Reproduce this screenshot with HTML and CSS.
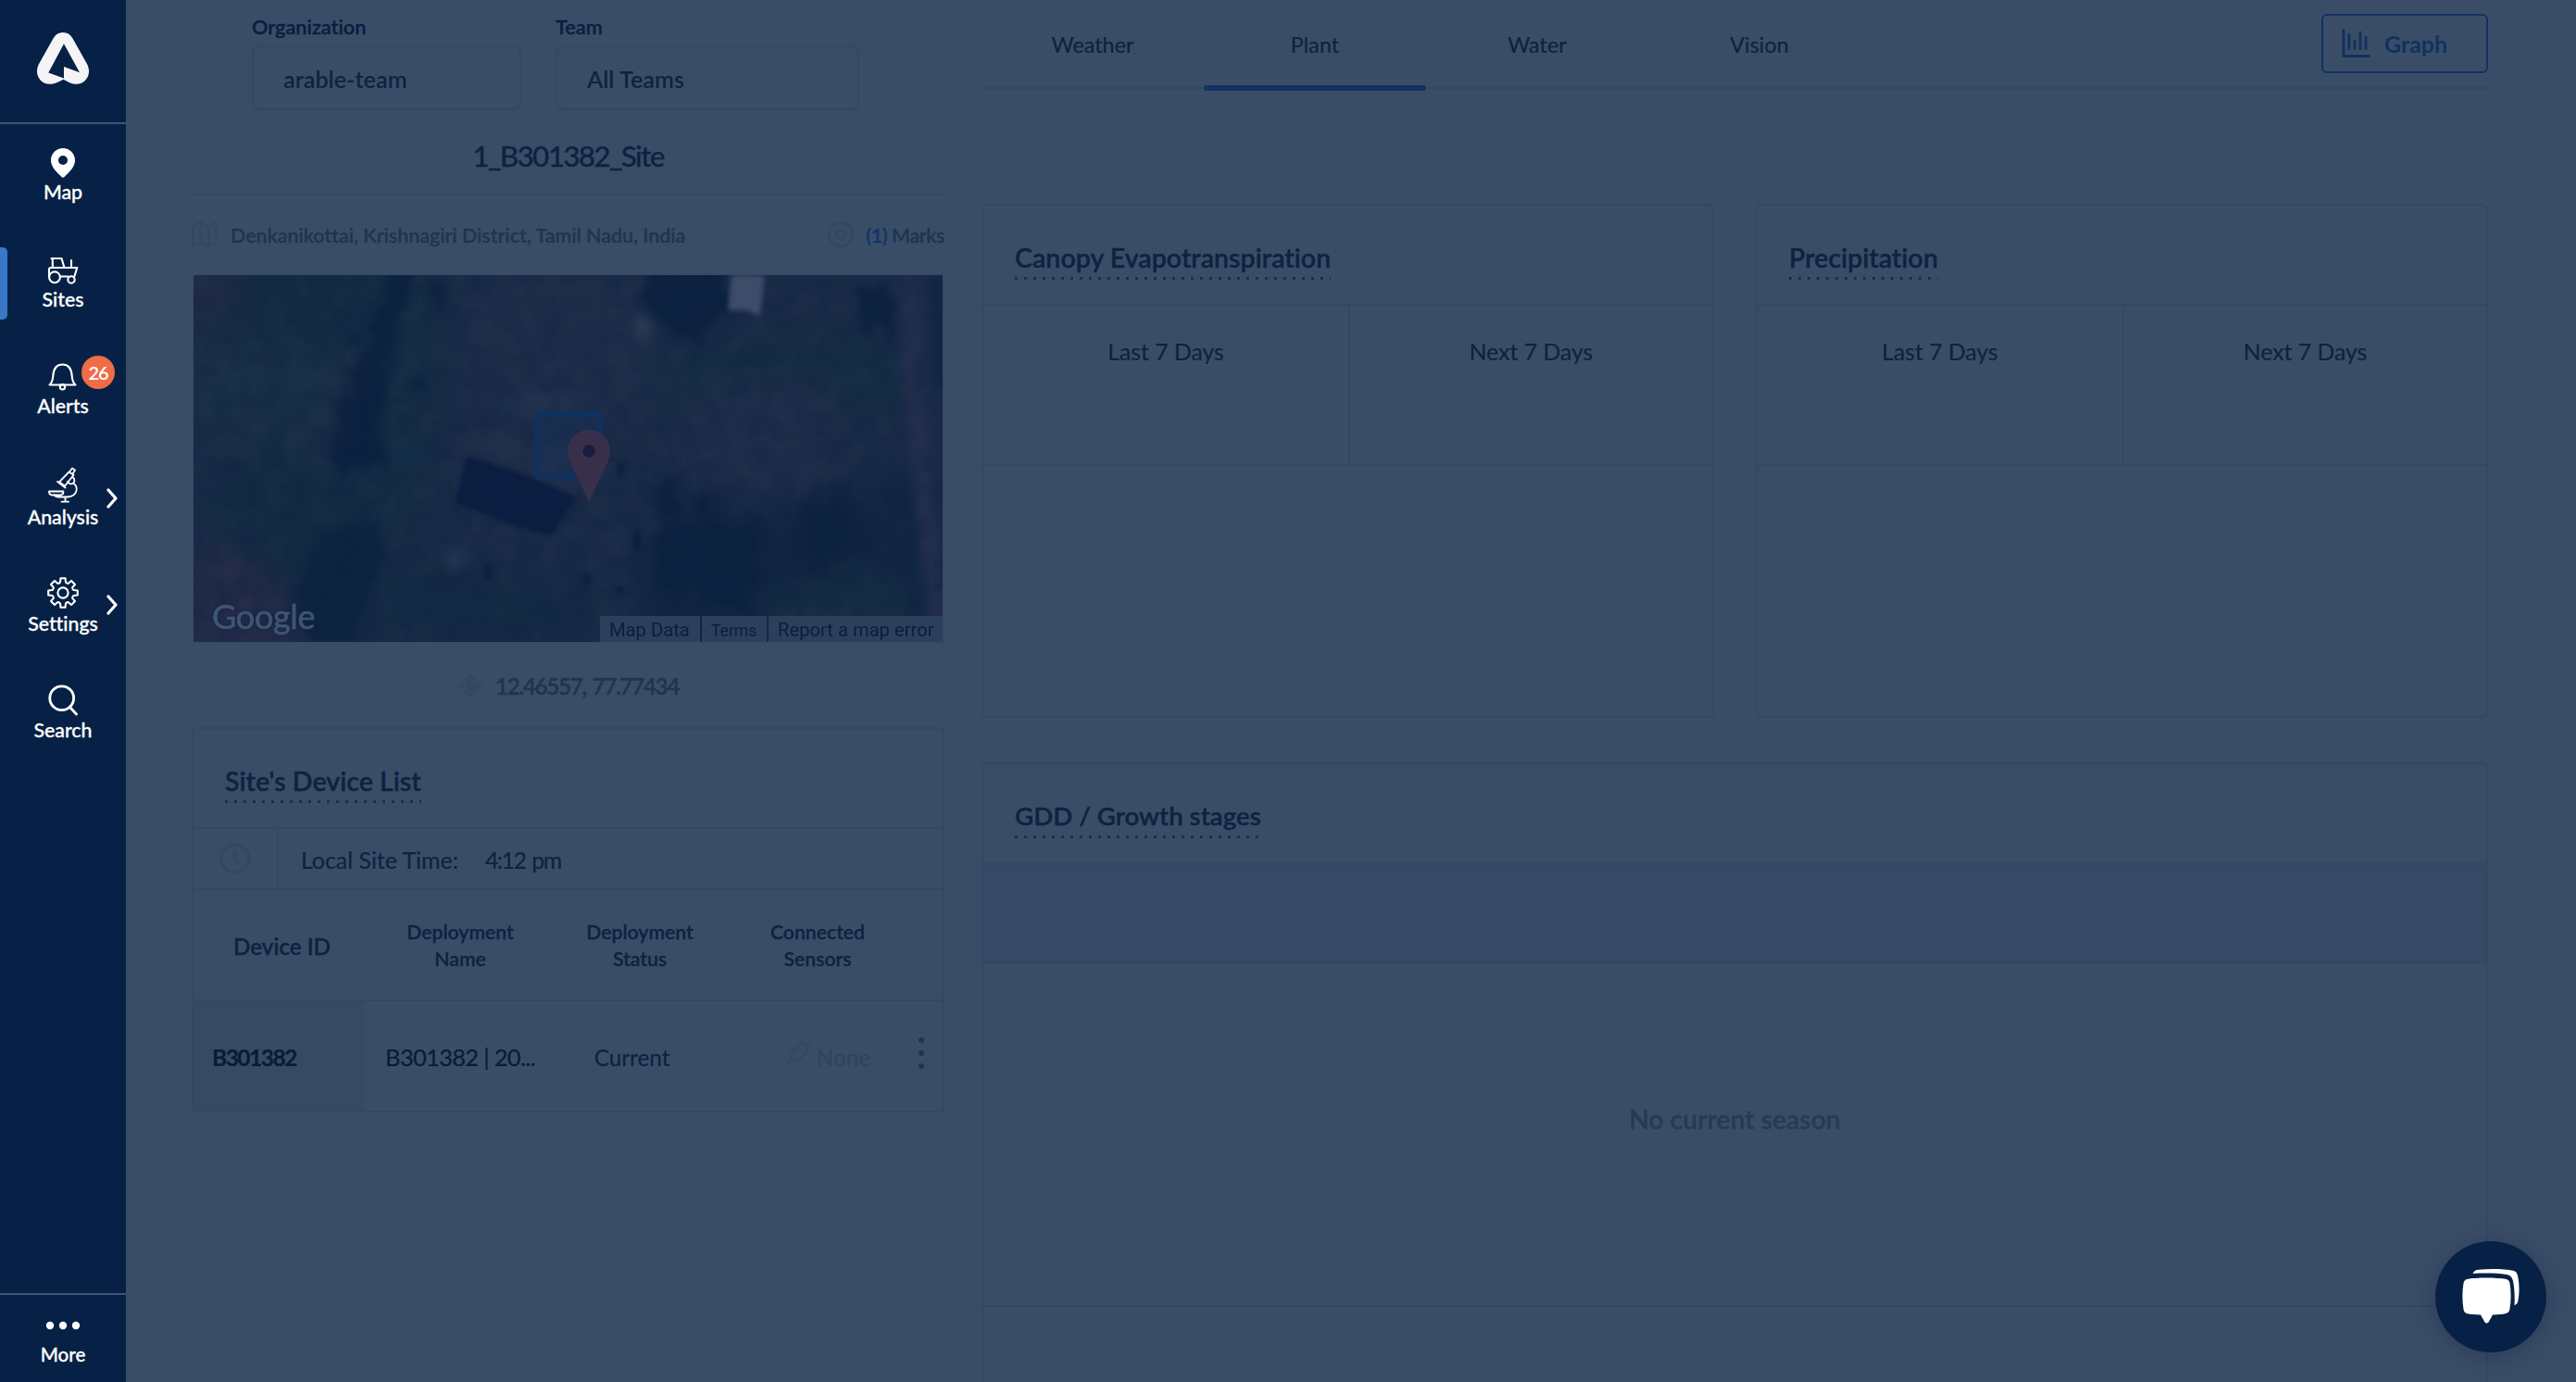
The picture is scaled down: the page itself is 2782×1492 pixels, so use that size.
FILE: index.html
```html
<!DOCTYPE html>
<html lang="en">
<head>
<meta charset="utf-8">
<title>1_B301382_Site</title>
<link rel="stylesheet" href="styles.css">
</head>
<body>
<aside class="sidebar">
  <div class="logo">
    <svg width="56" height="56" viewBox="0 0 56 56"><path fill="#f4f4f7" fill-rule="evenodd" d="M28 0c4.500 0 8 2 10.200 6L54.500 35c4.500 10-1.500 20.700-12 20.700-5 0-8-2-14.200-5C22 54 19 55.700 13.500 55.700 3 55.700-3 45 1.500 35L17.800 6C20 2 23.500 0 28 0zM29 12.300L12.300 43.500 29 49.500V37l17 6.300z"/></svg>
  </div>
  <nav class="nav">
    <a class="nav-item nav-map">
      <svg class="nav-icon" viewBox="0 0 40 40"><path fill="#fff" fill-rule="evenodd" d="M20 8c7.200 0 13 5.800 13 13 0 7.500-6.500 13-11.500 18q-1.500 1.500-3 0C13.500 34 7 28.500 7 21 7 13.800 12.800 8 20 8zm0 8a5 5 0 1 0 0 10 5 5 0 0 0 0-10z"/></svg>
      <span>Map</span>
    </a>
    <a class="nav-item nav-sites active">
      <svg class="nav-icon line" viewBox="0 0 40 40"><path d="M7.500 11h11l3 10M8.800 11v10M5 31V23q0-2 2-2h28.300l-3 9.500M17.500 30.500h8M29 13v8"/><circle cx="11" cy="31.300" r="5.900"/><circle cx="29" cy="34" r="3.700"/></svg>
      <span>Sites</span>
    </a>
    <a class="nav-item nav-alerts">
      <svg class="nav-icon line" viewBox="0 0 40 40"><path d="M5.500 32.500c3-2.500 3.500-5.500 3.800-9.500C9.700 15.500 13 10.500 19.500 10.500S29.300 15.500 29.700 23c.300 4 .800 7 3.800 9.500z"/><circle cx="19.500" cy="34.800" r="2.700"/></svg>
      <span>Alerts</span>
      <b class="badge">26</b>
    </a>
    <a class="nav-item nav-analysis">
      <svg class="nav-icon thin" viewBox="0 0 40 40"><path d="M27 6.500l3-4 3 2-2.500 4.300M26.500 6.500l5 3.300-9.500 12-6-4.500zM14 17l8.500 6.500M30.500 12c3.500 3 1.500 8-2 7.300-2 0-3-1-3.500-2.500M31 18.500c6 4 5 14.500-6 15H15c-2 0-4-1-4.500-2.500M5 27.500h15.500c0 3-1 4-4 4H8.500c-2.500 0-3.500-1.500-3.500-4zM22.500 34v4.500M18.500 38.700h7.500"/></svg>
      <span>Analysis</span>
      <svg class="chevron" viewBox="0 0 12 22"><path d="M2 2l8 9-8 9"/></svg>
    </a>
    <a class="nav-item nav-settings">
      <svg class="nav-icon line" viewBox="0 0 40 40"><g transform="translate(20 22)"><circle r="5.600"/><path d="M-3-11.400L-2.500-15.800H2.500L3-11.400Q4.500-9.800 5.900-10.200L9-13 13-9 10.200-5.900Q10-4 11.400-3L15.800-2.500V2.500L11.400 3Q9.800 4.500 10.200 5.900L13 9 9 13 5.900 10.200Q4 10 3 11.400L2.500 15.800H-2.500L-3 11.400Q-4.500 9.800-5.900 10.200L-9 13-13 9-10.200 5.900Q-10 4-11.400 3L-15.800 2.500V-2.500L-11.400-3Q-9.800-4.500-10.200-5.900L-13-9-9-13-5.900-10.200Q-4-10-3-11.400z"/></g></svg>
      <span>Settings</span>
      <svg class="chevron" viewBox="0 0 12 22"><path d="M2 2l8 9-8 9"/></svg>
    </a>
    <a class="nav-item nav-search">
      <svg class="nav-icon bold" viewBox="0 0 40 40"><circle cx="18.700" cy="20.700" r="12.900"/><path d="M27.500 30.500l7 7.500"/></svg>
      <span>Search</span>
    </a>
  </nav>
  <div class="more">
    <svg width="40" height="10" viewBox="0 0 40 10" fill="#fff"><circle cx="6" cy="5" r="4.200"/><circle cx="20" cy="5" r="4.200"/><circle cx="34" cy="5" r="4.200"/></svg>
    <span>More</span>
  </div>
</aside>

<main class="content">
  <section class="site">
    <div class="filters">
      <label class="filter filter-org"><span>Organization</span><div class="select">arable-team</div></label>
      <label class="filter filter-team"><span>Team</span><div class="select">All Teams</div></label>
    </div>
    <h1 class="site-name">1_B301382_Site</h1>
    <div class="location">
      <svg width="28" height="30" viewBox="0 0 28 30" class="faint"><path d="M1.500 6.500L9.500 2l9 5.500L26.500 2v20.500l-8 5.500-9-5.500-8 5.500zM9.500 2v20.500M18.500 7.500V28"/></svg>
      <span class="place">Denkanikottai, Krishnagiri District, Tamil Nadu, India</span>
      <svg width="28" height="28" viewBox="0 0 28 28" class="faint"><circle cx="14" cy="14" r="12.800"/><circle cx="14" cy="14" r="4.500"/></svg>
      <span class="marks"><i>(1)</i> Marks</span>
    </div>
    <div class="map">
      <svg class="aerial" viewBox="0 0 809 396" preserveAspectRatio="none" color-interpolation-filters="sRGB">
        <defs>
          <filter id="b20" x="-50%" y="-50%" width="200%" height="200%"><feGaussianBlur stdDeviation="16"/></filter>
          <filter id="b6" x="-50%" y="-50%" width="200%" height="200%"><feGaussianBlur stdDeviation="6"/></filter>
          <filter id="b3" x="-50%" y="-50%" width="200%" height="200%"><feGaussianBlur stdDeviation="2.500"/></filter>
          <filter id="trees" x="-20%" y="-20%" width="140%" height="140%"><feTurbulence type="fractalNoise" baseFrequency=".06" numOctaves="3" seed="4"/><feDisplacementMap in="SourceGraphic" scale="34" xChannelSelector="R" yChannelSelector="G"/><feGaussianBlur stdDeviation="4"/></filter>
          <filter id="grain" x="0" y="0" width="100%" height="100%"><feTurbulence type="fractalNoise" baseFrequency=".04" numOctaves="4" seed="9"/><feColorMatrix values="0 0 0 0 .05  0 0 0 0 .13  0 0 0 0 .25  1.600 0 0 0 -.6"/></filter>
        </defs>
        <rect width="809" height="396" fill="#1b2c48"/>
        <g filter="url(#b20)">
          <path fill="#152c45" d="M40-20H230V70L130 110 50 60zM40 190L210 210 170 400 90 330 0 250z"/>
          <path fill="#1a3048" d="M0 60L180 80 130 200 0 170z"/>
          <path fill="#172e46" d="M215 0H275L250 250 200 300 190 150zM500 80L760 60 780 150 620 130 520 200z"/>
          <path fill="#252c49" d="M0 290L50 300 110 360 110 400H0zM0 0H50L20 50H0z"/>
          <path fill="#1e2e4a" d="M290 0H480L500 120 480 170 300 120z"/>
          <path fill="#122742" d="M520 230L640 260 790 200 809 400H470z"/>
          <path fill="#1f2d4a" d="M520 130L680 110 690 200 620 250 520 220z"/>
          <path fill="#182f47" d="M620 360L740 320 790 396H600z"/>
          <path fill="#152b45" d="M200 290L250 310 440 340 420 400H180z"/>
        </g>
        <g filter="url(#trees)" fill="#0b2140" opacity=".85">
          <path d="M215-10L240 0 215 70 208 130 200 200 160 218 150 190 160 140 175 90 200 40z"/>
          <path d="M130 290L150 280 195 260 205 300 190 350 165 400H120L110 340z" opacity=".75"/>
          <path d="M490-10H575V40L545 70 505 60 488 30zM715 10L760 20 755 70 720 50z"/>
          <path d="M500 235L512 210 530 270 500 265zM550 235L560 240 545 275 530 270zM480 290L470 320 480 310zM510 265L495 300 500 340 600 360 610 270z" opacity=".9"/>
          <path d="M650 250L700 230 720 290 660 330z" opacity=".6"/>
          <ellipse cx="244" cy="120" rx="11" ry="13" opacity=".7"/>
          <ellipse cx="265" cy="25" rx="10" ry="14" opacity=".7"/>
          <ellipse cx="205" cy="200" rx="5" ry="22"/>
        </g>
        <g filter="url(#b6)">
          <path fill="#212f4b" d="M296 160L420 190 415 235 290 190z"/>
          <path fill="none" stroke="#252f4e" stroke-width="18" d="M770 0C775 140 795 280 806 396"/>
          <path fill="none" stroke="#0f2440" stroke-width="10" d="M800 0L809 120"/>
          <circle cx="484" cy="57" r="12" fill="#2b3955"/>
          <ellipse cx="370" cy="140" rx="40" ry="12" fill="#233350"/>
          <circle cx="285" cy="305" r="12" fill="#243652"/><circle cx="230" cy="195" r="18" fill="#132f48"/>
        </g>
        <rect width="809" height="396" filter="url(#grain)" opacity=".45"/>
        <g filter="url(#b3)">
          <path fill="#0b1d40" d="M295 195L355 215 415 240 405 252 385 282 345 270 283 246z"/>
          <path fill="#3c4c69" d="M581 0H617L612 44 596 38 577 38z"/>
          <g fill="#0b203f"><ellipse cx="318" cy="320" rx="4" ry="9"/><ellipse cx="425" cy="328" rx="4" ry="7"/><ellipse cx="461" cy="210" rx="4" ry="8"/><ellipse cx="461" cy="340" rx="4" ry="5"/><ellipse cx="479" cy="285" rx="5" ry="12"/></g>
        </g>
        <rect x="371.500" y="150" width="68" height="68" rx="1" fill="#17355f" fill-opacity=".35" stroke="#10315e" stroke-width="6"/>
        <path fill="#38304b" d="M427 167c13 0 23 10 23 23 0 6-2 10-4.500 15L427 245l-18.500-40c-2.500-5-4.500-9-4.500-15 0-13 10-23 23-23z"/>
        <circle cx="427" cy="190" r="6.800" fill="#1b1d3f"/>
      </svg>
      <div class="google">Google</div>
      <div class="attribution"><span>Map Data</span><span class="terms">Terms</span><span>Report a map error</span></div>
    </div>
    <div class="coords">
      <svg width="28" height="28" viewBox="0 0 28 28" class="faint"><circle cx="14" cy="14" r="8.500"/><circle cx="14" cy="14" r="4.500" fill="#334863"/><path d="M14 0v6M14 22v6M0 14h6M22 14h6"/></svg>
      <span>12.46557, 77.77434</span>
    </div>
    <div class="card devices">
      <header class="card-head"><h2>Site's Device List</h2></header>
      <div class="time-row">
        <div class="clock"><svg width="34" height="34" viewBox="0 0 34 34"><circle cx="17" cy="17" r="15"/><path d="M16.500 8v10l5.500 4"/></svg></div>
        <span class="time-label">Local Site Time:</span><span class="time-value">4:12 pm</span>
      </div>
      <div class="grid-row grid-head">
        <div class="id-head">Device ID</div><div>Deployment<br>Name</div><div>Deployment<br>Status</div><div>Connected<br>Sensors</div><div></div>
      </div>
      <div class="grid-row grid-data">
        <div class="device-id">B301382</div>
        <div class="device-name">B301382 | 20...</div>
        <div class="device-status">Current</div>
        <div class="device-sensors"><svg width="28" height="28" viewBox="0 0 28 28" class="faint"><path d="M1.500 26.500l5-5M26.500 1.500l-5 5M11 8l6-4c3-2 9 4 7 7l-4 5M9 10l-3 4c-3 4 3 11 8 8l3-3M10 9l3 3M16 19l2-2"/></svg><span>None</span></div>
        <div class="kebab"><i></i><i></i><i></i></div>
      </div>
    </div>
  </section>

  <section class="data">
    <div class="tabs">
      <a class="tab">Weather</a><a class="tab selected">Plant</a><a class="tab">Water</a><a class="tab">Vision</a>
      <button class="graph">
        <svg width="31" height="32" viewBox="0 0 31 32"><path d="M2 1.500V29.500H29.500" stroke-width="3"/><path d="M8 6v15.500M14 13.500v8M20 4v17.500M26 9.500v12" stroke-width="3"/></svg>
        <span>Graph</span>
      </button>
    </div>
    <div class="summary">
      <div class="card metric">
        <header class="card-head"><h2>Canopy Evapotranspiration</h2></header>
        <div class="periods"><div>Last 7 Days</div><div>Next 7 Days</div></div>
      </div>
      <div class="card metric">
        <header class="card-head"><h2>Precipitation</h2></header>
        <div class="periods"><div>Last 7 Days</div><div>Next 7 Days</div></div>
      </div>
    </div>
    <div class="card growth">
      <header class="card-head"><h2>GDD / Growth stages</h2></header>
      <div class="band"></div>
      <div class="season">No current season</div>
    </div>
  </section>
</main>

<button class="chat">
  <svg width="62" height="60" viewBox="0 0 62 60" fill="#fff"><path d="M5 11C15 9 37 9 48 11q3 1 3.500 4c1.500 9 1.500 19 0 28q-.500 4-4 5c-5 1-9 1.300-14.500 1.500L28.500 57.500q-2 2-4 0L20 49.500C15 49.300 9 49 5 48q-3-1-3.500-4.500C0 34 0 25 1.500 15.500Q2 12 5 11z"/><path d="M12 4C13 2 15 1 18 .800 30-.300 45-.200 56 2q3 1 4 5c2 9 2 19 .500 27-.5 3-2 4.500-4 5 .5-9 0-19-1.500-26Q54 7 48 6C37 4.300 24 4.300 11.500 5z"/></svg>
</button>
</body>
</html>
```
FILE: styles.css
```css
:root {
  --navy: #062145;
  --page: #3a4d67;
  --line: #334862;
  --ink: #0d2342;
  --blue: #11325f;
}
* { box-sizing: border-box; }
body {
  margin: 0;
  height: 1492px;
  overflow: hidden;
  display: flex;
  background: var(--page);
  color: var(--ink);
  font-family: Lato, "Liberation Sans", sans-serif;
  font-weight: 500;
  font-variant-ligatures: none;
}
h1, h2 { margin: 0; font-weight: 500; }
i { font-style: normal; }
svg { display: block; flex: none; }
button { font: inherit; padding: 0; }

/* Sidebar */
.sidebar {
  width: 136px;
  height: 1492px;
  flex: none;
  display: flex;
  flex-direction: column;
  background: var(--navy);
  color: #fff;
  font-size: 21.3px;
  line-height: 28px;
}
.logo {
  height: 134px;
  padding: 35px 0 0 40px;
  border-bottom: 2px solid #44546f;
}
.nav { flex: 1; }
.nav-item {
  position: relative;
  height: 115px;
  display: flex;
  flex-direction: column;
  align-items: center;
  justify-content: flex-end;
}
.nav-item span, .more span { -webkit-text-stroke: .3px; }
.nav-map { height: 87px; }
.nav-sites { height: 116px; }
.nav-analysis { height: 120px; }
.nav-icon { width: 40px; height: 40px; margin-bottom: 1px; }
.nav-icon, .chevron { fill: none; stroke-linecap: round; stroke-linejoin: round; }
.line { stroke: #fff; stroke-width: 2.1; }
.thin { stroke: #fff; stroke-width: 1.8; }
.bold { stroke: #fff; stroke-width: 2.8; }
.active::before {
  content: "";
  position: absolute;
  left: 0;
  top: 46px;
  width: 8px;
  height: 78px;
  border-radius: 0 5px 5px 0;
  background: #3878c7;
}
.badge {
  position: absolute;
  left: 88px;
  top: 47px;
  width: 36px;
  height: 36px;
  border-radius: 50%;
  background: #ee6c46;
  font-size: 20px;
  font-weight: 600;
  letter-spacing: -1px;
  line-height: 37px;
  text-align: center;
}
.chevron {
  position: absolute;
  left: 115px;
  bottom: 23px;
  width: 12px;
  height: 22px;
  stroke: #fff;
  stroke-width: 3.2;
}
.more {
  height: 96px;
  display: flex;
  flex-direction: column;
  align-items: center;
  gap: 12px;
  padding-top: 28px;
  border-top: 2px solid #44546f;
  font-size: 20.6px;
}

/* Page */
.content {
  flex: 1;
  display: grid;
  grid-template-columns: 813px 1627px;
  column-gap: 40px;
  padding-left: 71px;
  align-items: start;
}
.faint { fill: none; stroke: var(--line); stroke-width: 2.4; }
.card { border: 2px solid var(--line); border-radius: 6px; }
.card-head { height: 108px; padding: 40px 0 0 34px; border-bottom: 2px solid var(--line); }
.card-head h2 {
  width: fit-content;
  height: 40px;
  font-size: 28.6px;
  font-weight: 600;
  -webkit-text-stroke: .4px;
  line-height: 32px;
  background: repeating-linear-gradient(90deg, var(--blue) 0 3px, transparent 3px 10px) 0 100% / 100% 3px no-repeat;
}

/* Site column */
.filters { display: flex; gap: 37px; padding: 14px 0 0 65px; }
.filter { font-size: 21.7px; font-weight: 600; line-height: 30px; color: #081e40; }
.filter > span { -webkit-text-stroke: .3px; }
.filter-org { width: 291px; }
.filter-team { width: 328px; }
.select {
  height: 70px;
  margin-top: 5px;
  padding-left: 32px;
  border: 2px solid var(--line);
  border-radius: 8px;
  font-size: 25.2px;
  line-height: 69px;
  color: var(--ink);
}
.site-name {
  height: 92px;
  padding-top: 5px;
  border-bottom: 2px solid var(--line);
  font-size: 31.5px;
  line-height: 88px;
  letter-spacing: -1.7px;
  text-align: center;
  -webkit-text-stroke: .3px;
}
.location {
  height: 84px;
  display: flex;
  align-items: center;
  font-size: 21.4px;
  font-weight: 600;
  color: #1e3552;
  -webkit-text-stroke: .3px;
}
.place { flex: 1; padding: 2px 0 0 14px; }
.marks { padding: 2px 0 0 13px; letter-spacing: -.4px; }
.marks i { color: #10356b; }
.map {
  position: relative;
  height: 400px;
  border: 2px solid #384a66;
}
.aerial { width: 809px; height: 396px; }
.google {
  position: absolute;
  left: 20px;
  bottom: 4px;
  font-size: 36px;
  font-weight: 400;
  line-height: 48px;
  color: #3f5573;
  letter-spacing: -.3px;
  -webkit-text-stroke: .6px #3f5573;
  text-shadow: 0 0 4px #10254a;
}
.attribution {
  position: absolute;
  right: 0;
  bottom: 0;
  height: 28px;
  display: flex;
  gap: 2px;
  font: 400 20.200px/30px Roboto, sans-serif;
  color: #0a1f3d;
  white-space: nowrap;
}
.attribution span { height: 28px; padding-left: 10px; background: #2c3f5b; }
.attribution span:first-child { width: 108px; }
.attribution .terms { width: 70px; font-size: 17.500px; line-height: 32px; }
.attribution span:last-child { width: 188px; }
.coords {
  height: 90px;
  display: flex;
  align-items: center;
  justify-content: center;
  gap: 13px;
  font-size: 24.2px;
  font-weight: 600;
  letter-spacing: -1.3px;
  word-spacing: 2px;
  color: #1e3552;
  -webkit-text-stroke: .4px;
}
.coords span { padding-top: 1px; }
.time-row {
  height: 66px;
  display: flex;
  border-bottom: 2px solid var(--line);
  font-size: 24.9px;
  font-weight: 400;
  line-height: 67px;
  -webkit-text-stroke: .2px;
}
.clock {
  width: 92px;
  padding: 15px 0 0 28px;
  border-right: 2px solid var(--line);
}
.clock svg { fill: none; stroke: var(--line); stroke-width: 3.4; }
.time-label { margin: 0 29px 0 24px; }
.time-value { letter-spacing: -1.5px; word-spacing: 2px; }
.grid-row {
  display: grid;
  grid-template-columns: 185px 206px 182px 202px 34px;
  align-items: center;
  text-align: center;
}
.grid-head {
  height: 120px;
  padding-top: 1px;
  border-bottom: 2px solid var(--line);
  font-size: 21.2px;
  font-weight: 600;
  line-height: 29px;
  -webkit-text-stroke: .3px;
}
.id-head { padding: 1px 0 0 6px; font-size: 24.2px; }
.grid-data { height: 118px; font-size: 24.3px; font-weight: 400; -webkit-text-stroke: .2px; }
.grid-data > div { height: 118px; line-height: 121px; }
.grid-data .device-id {
  padding-left: 20px;
  background: #374a63;
  text-align: left;
  font-size: 24.5px;
  font-weight: 700;
  letter-spacing: -1.5px;
  color: #071c3b;
}
.device-name { font-size: 25.5px; letter-spacing: -.7px; color: #071c3b; }
.device-status { padding-right: 17px; }
.device-sensors {
  display: flex;
  justify-content: center;
  align-items: flex-start;
  gap: 6px;
  padding-left: 22px;
  color: #2f445f;
}
.device-sensors svg { margin-top: 42px; }
.grid-data .kebab {
  display: flex;
  flex-direction: column;
  gap: 8px;
  align-items: center;
  padding: 39px 12px 0 0;
}
.kebab i { width: 6px; height: 6px; border-radius: 50%; background: #1e3552; }

/* Data column */
.tabs {
  height: 96px;
  display: flex;
  border-bottom: 2px solid var(--line);
}
.tab {
  position: relative;
  width: 240px;
  font-size: 23.4px;
  font-weight: 400;
  line-height: 97px;
  text-align: center;
  -webkit-text-stroke: .2px;
}
.selected::after {
  content: "";
  position: absolute;
  left: 0;
  right: 0;
  top: 92px;
  height: 6px;
  border-radius: 3px;
  background: var(--blue);
}
.graph {
  width: 180px;
  height: 64px;
  margin: 15px 0 0 auto;
  display: flex;
  align-items: center;
  gap: 15px;
  padding-left: 20px;
  border: 2px solid var(--blue);
  border-radius: 6px;
  background: none;
  color: var(--blue);
  font-size: 25px;
  font-weight: 700;
}
.graph svg { fill: none; stroke: var(--blue); stroke-linecap: round; stroke-linejoin: round; }
.summary {
  display: grid;
  grid-template-columns: 791px 791px;
  gap: 45px;
  margin-top: 124px;
}
.metric { height: 555px; }
.periods {
  height: 173px;
  display: grid;
  grid-template-columns: 394px 1fr;
  border-bottom: 2px solid var(--line);
  font-size: 24.8px;
  font-weight: 400;
  line-height: 99px;
  text-align: center;
  -webkit-text-stroke: .2px;
}
.periods div + div { border-left: 2px solid var(--line); }
.growth {
  height: 669px;
  margin-top: 48px;
  border-bottom: 0;
  border-radius: 6px 6px 0 0;
}
.growth h2 { font-size: 27.7px; }
.band {
  height: 108px;
  background: #364967;
  border-top: 2px solid var(--line);
  border-bottom: 4px solid var(--line);
}
.season {
  height: 370px;
  border-bottom: 2px solid var(--line);
  font-size: 28.3px;
  font-weight: 600;
  line-height: 334px;
  text-align: center;
  color: #253b58;
  -webkit-text-stroke: .4px;
}

.chat {
  position: fixed;
  left: 2630px;
  top: 1340px;
  width: 120px;
  height: 120px;
  border: 0;
  border-radius: 50%;
  background: var(--navy);
  box-shadow: 0 4px 26px rgba(20, 30, 60, .35);
  display: flex;
  align-items: center;
  justify-content: center;
}
```
